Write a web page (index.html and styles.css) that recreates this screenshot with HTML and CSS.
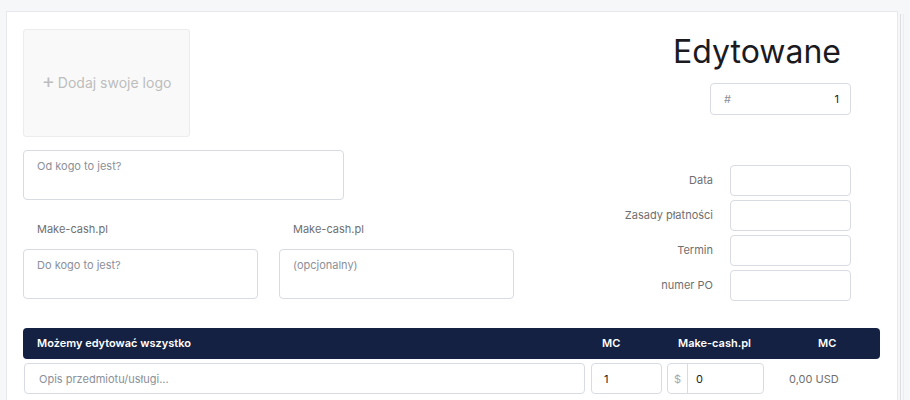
FILE: index.html
```html
<!DOCTYPE html>
<html lang="pl">
<head>
<meta charset="utf-8">
<title>Faktura</title>
<link rel="stylesheet" href="styles.css">
</head>
<body>
<div class="page">
  <div class="card">
    <div class="top">
      <div class="left">
        <div class="logo-box"><span class="plus">+</span> Dodaj swoje logo</div>
        <div class="box from">Od kogo to jest?</div>
        <div class="parties">
          <div class="party">
            <div class="party-label">Make-cash.pl</div>
            <div class="box party-box">Do kogo to jest?</div>
          </div>
          <div class="party">
            <div class="party-label">Make-cash.pl</div>
            <div class="box party-box">(opcjonalny)</div>
          </div>
        </div>
      </div>
      <div class="right">
        <h1 class="title">Edytowane</h1>
        <div class="number"><span class="hash">#</span><span class="num">1</span></div>
        <div class="meta">
          <div class="meta-label">Data</div><div class="meta-input"></div>
          <div class="meta-label">Zasady płatności</div><div class="meta-input"></div>
          <div class="meta-label">Termin</div><div class="meta-input"></div>
          <div class="meta-label">numer PO</div><div class="meta-input"></div>
        </div>
      </div>
    </div>
    <div class="items-head">
      <div class="h-desc">Możemy edytować wszystko</div>
      <div class="h-qty">MC</div>
      <div class="h-rate">Make-cash.pl</div>
      <div class="h-amount">MC</div>
    </div>
    <div class="item-row">
      <div class="cell desc">Opis przedmiotu/usługi...</div>
      <div class="cell qty">1</div>
      <div class="cell rate"><span class="cur">$</span><span class="rate-val">0</span></div>
      <div class="amount">0,00 USD</div>
    </div>
  </div>
  <div class="edge"></div>
</div>
</body>
</html>
```

FILE: styles.css
```css
* { box-sizing: border-box; }
html, body { margin: 0; padding: 0; }
body {
  background: #f6f7f9;
  font-family: Inter, "Noto Sans", "Liberation Sans", sans-serif;
  color: #222;
  overflow: hidden;
  height: 400px;
}
.page {
  display: flex;
  align-items: flex-start;
  padding: 11px 0 0 6px;
}
.card {
  width: 892px;
  height: 420px;
  background: #fff;
  border: 1px solid #e6e8ee;
  padding: 17px 17px 0 16px;
}
.edge {
  margin-top: 3px;
  margin-left: 2px;
  width: 4px;
  height: 400px;
  border-left: 1px solid #dcdde0;
  border-right: 1px solid #ebecee;
}
.top {
  display: flex;
  justify-content: space-between;
  align-items: flex-start;
}
.left { width: 491px; }
.logo-box {
  width: 167px;
  height: 108px;
  background: #f9f9f9;
  border: 1px solid #ececec;
  border-radius: 3px;
  display: flex;
  align-items: center;
  justify-content: center;
  color: #bdbdbd;
  font-size: 14px;
  padding-bottom: 2px;
}
.plus { font-size: 20px; margin-right: 3px; font-weight: 400; line-height: 1; position: relative; top: -1px; }
.box {
  border: 1px solid #d8dbe2;
  border-radius: 4px;
  font-size: 11px;
  line-height: 16px;
  color: #8b9099;
  padding: 7px 13px;
  background: #fff;
}
.from {
  margin-top: 13px;
  width: 321px;
  height: 50px;
}
.parties {
  display: flex;
  gap: 21px;
}
.party { width: 235px; }
.party-label {
  font-size: 11px;
  line-height: 16px;
  color: #6f6f6f;
  padding: 21px 14px 12px;
}
.party-box { height: 50px; }
.right {
  display: flex;
  flex-direction: column;
  align-items: flex-end;
  padding-right: 29px;
}
.title {
  margin: 3px 10px 0 0;
  font-size: 32px;
  line-height: 40px;
  font-weight: 400;
  color: #1b1b1f;
}
.number {
  margin-top: 11px;
  width: 141px;
  height: 32px;
  border: 1px solid #d8dbe2;
  border-radius: 4px;
  display: flex;
  justify-content: space-between;
  align-items: center;
  padding: 0 11px 0 13px;
  font-size: 11px;
}
.hash { color: #8b9099; }
.num { color: #222; }
.meta {
  margin-top: 50px;
  display: grid;
  grid-template-columns: auto 121px;
  column-gap: 17px;
  row-gap: 4px;
  align-items: center;
}
.meta-label {
  text-align: right;
  font-size: 11px;
  color: #6f6f6f;
  padding-bottom: 2px;
}
.meta-input {
  height: 31px;
  border: 1px solid #d8dbe2;
  border-radius: 4px;
}
.items-head {
  margin-top: 27px;
  height: 31px;
  background: #142142;
  border-radius: 4px;
  display: grid;
  grid-template-columns: 563px 71px 97px 1fr;
  column-gap: 5px;
  align-items: center;
  color: #fff;
  font-size: 11px;
  font-weight: 600;
  padding-bottom: 2px;
}
.h-desc { padding-left: 14px; }
.h-qty { padding-left: 11px; }
.h-rate { padding-left: 11px; }
.h-amount { padding-left: 49px; }
.item-row {
  margin-top: 4px;
  display: grid;
  grid-template-columns: 563px 71px 97px 1fr;
  column-gap: 5px;
  align-items: center;
}
.cell {
  height: 31px;
  border: 1px solid #d8dbe2;
  border-radius: 4px;
  font-size: 11px;
  display: flex;
  align-items: center;
}
.desc { margin: 0 1px; padding-left: 14px; color: #8b9099; }
.qty { padding-left: 12px; color: #222; }
.rate { color: #222; }
.cur {
  width: 20px;
  height: 100%;
  border-right: 1px solid #d8dbe2;
  display: flex;
  align-items: center;
  justify-content: center;
  color: #a5a8ae;
}
.rate-val { padding-left: 8px; }
.amount {
  font-size: 11px;
  color: #6f6f6f;
  padding-left: 20px;
}
```
